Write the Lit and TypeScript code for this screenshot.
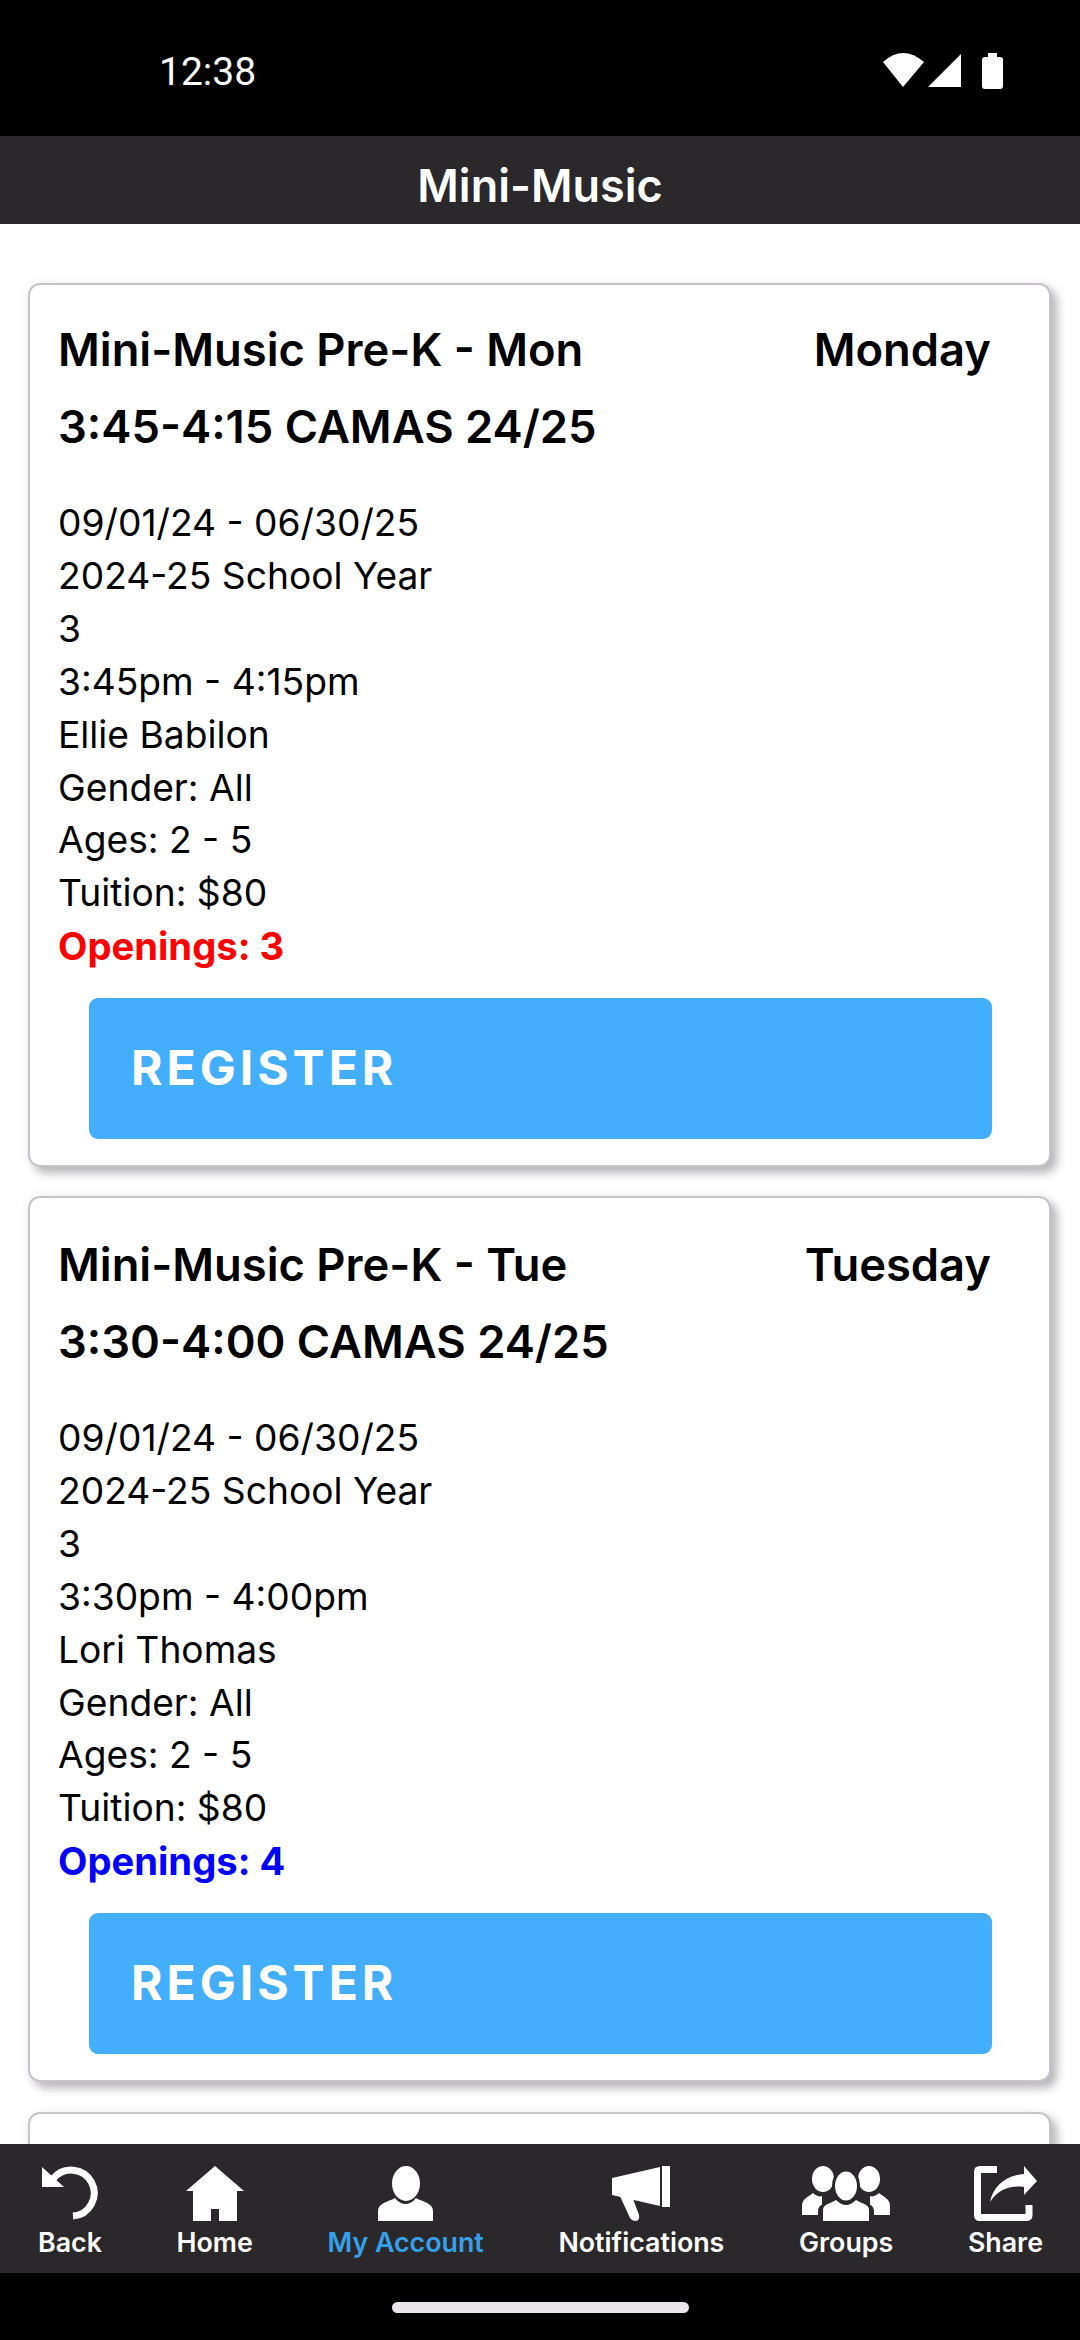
import { LitElement, html, css, svg } from "lit";
import { customElement } from "lit/decorators.js";

const ICONS: Record<string, { w: number; body: unknown }> = {
  back: { w: 56, body: svg`<path d="M11 13A23 23 0 1 1 31 50" fill="none" stroke="#fff" stroke-width="7"/><path d="M0 1V21H22Z" fill="#fff"/>` },
  home: { w: 58, body: svg`<path fill-rule="evenodd" d="M29 0L58 25H51V55H33V43H25V55H7V25H0Z" fill="#fff"/>` },
  account: { w: 55, body: svg`<ellipse cx="28" cy="17.5" rx="14" ry="17.5" fill="#fff"/><path d="M0 55V45C0 37 10 36 17 32C20 36 24 38 27.5 38C31 38 35 36 38 32C45 36 55 37 55 45V55Z" fill="#fff"/>` },
  notifications: { w: 58, body: svg`<path d="M0 12L48 1V40L0 29Z" fill="#fff"/><path d="M50 0H58V41H50Z" fill="#fff"/><path d="M7 28L21 33L27 49Q28 55 23 55Q20 55 18 52Z" fill="#fff"/>` },
  groups: { w: 88, body: svg`<ellipse cx="21" cy="13" rx="11" ry="13" fill="#fff"/><ellipse cx="67" cy="13" rx="11" ry="13" fill="#fff"/><path d="M0 49V40C0 33 6 31 11 27C14 30 18 31 20 30V49Z" fill="#fff"/><path d="M88 49V40C88 33 82 31 77 27C74 30 70 31 68 30V49Z" fill="#fff"/><ellipse cx="44" cy="20" rx="14" ry="18" fill="#2a282b"/><path d="M16 55V45C16 38 24 37 31 33L57 33C64 37 72 38 72 45V55Z" fill="#2a282b"/><ellipse cx="44" cy="20" rx="11" ry="14.5" fill="#fff"/><path d="M21 55V44C21 38 28 38 34 34C37 37 41 39 44 39C47 39 51 37 54 34C60 38 67 38 67 44V55Z" fill="#fff"/>` },
  share: { w: 63, body: svg`<path d="M23 3.5H6Q3.5 3.5 3.5 6V49Q3.5 51.5 6 51.5H52Q55 51.5 55 49V39" fill="none" stroke="#fff" stroke-width="7"/><path d="M50 0L63 15L50 29V21C35 19 24 24 16 36C19 20 32 9 50 8Z" fill="#fff"/>` },
};

interface Course {
  title: [string, string];
  day: string;
  time: string;
  teacher: string;
  openings: number;
  color: string;
}

const COURSES: Course[] = [
  { title: ["Mini-Music Pre-K - Mon", "3:45-4:15 CAMAS 24/25"], day: "Monday", time: "3:45pm - 4:15pm", teacher: "Ellie Babilon", openings: 3, color: "#ff0000" },
  { title: ["Mini-Music Pre-K - Tue", "3:30-4:00 CAMAS 24/25"], day: "Tuesday", time: "3:30pm - 4:00pm", teacher: "Lori Thomas", openings: 4, color: "#0000ff" },
];

const NAV = [
  { id: "back", label: "Back" },
  { id: "home", label: "Home" },
  { id: "account", label: "My Account", active: true },
  { id: "notifications", label: "Notifications" },
  { id: "groups", label: "Groups" },
  { id: "share", label: "Share" },
];

@customElement("app-root")
export class AppRoot extends LitElement {
  static styles = css`
    :host { display: flex; flex-direction: column; width: 1080px; height: 2340px; overflow: hidden; background: #fff; font-family: Inter, "Liberation Sans", sans-serif; color: #000; }
    .status { flex: none; height: 136px; box-sizing: border-box; background: #000; color: #fff; display: flex; align-items: center; justify-content: space-between; padding: 8px 77px 0 159px; font: 400 39px Roboto, sans-serif; }
    .status svg { display: block; margin-bottom: 2px; }
    .header { flex: none; height: 88px; box-sizing: border-box; padding-top: 10px; background: #2a282b; color: #fff; display: flex; align-items: center; justify-content: center; font-size: 45px; font-weight: 600; }
    .main { flex: 1; min-height: 0; overflow: hidden; padding: 59px 29px 0 28px; display: flex; flex-direction: column; gap: 29px; background: #fff; }
    .card { flex: none; box-sizing: border-box; height: 884px; background: #fff; border: 2px solid #c6c4c8; border-radius: 12px; box-shadow: 6px 6px 10px rgba(60, 58, 64, 0.36), 0 0 14px rgba(60, 58, 64, 0.05); padding: 26px 28px 0; }
    .card.second { height: 886px; padding-top: 28px; }
    .card.peek { margin-top: 1px; }
    .head { display: flex; justify-content: space-between; align-items: flex-start; padding-right: 30px; font-size: 45.3px; font-weight: 600; line-height: 77px; }
    .body { margin-top: 32px; font-size: 37.2px; line-height: 52.9px; }
    .open { font-weight: 700; font-size: 38.2px; }
    .btn { margin: 25px 29px 0 31px; height: 141px; box-sizing: border-box; padding: 0 0 2px 42px; border-radius: 9px; background: #43aefb; color: #fff; display: flex; align-items: center; font-size: 48px; font-weight: 700; letter-spacing: 4px; }
    .nav { flex: none; height: 129px; background: #2a282b; color: #fff; display: flex; justify-content: space-between; padding: 22px 37px 0 38px; box-sizing: border-box; }
    .item { display: flex; flex-direction: column; align-items: center; font-size: 26.8px; font-weight: 600; line-height: 29px; }
    .item svg { display: block; height: 55px; margin-bottom: 7px; }
    .active { color: #35a0e8; }
    .foot { flex: none; height: 67px; background: #000; display: flex; justify-content: center; padding-top: 29px; box-sizing: border-box; }
    .pill { width: 297px; height: 11px; border-radius: 6px; background: #e8e6e9; }
  `;

  private card(c: Course, i: number) {
    return html`<section class="card ${i === 1 ? "second" : ""}">
      <div class="head"><div>${c.title[0]}<br />${c.title[1]}</div><div>${c.day}</div></div>
      <div class="body">
        <div>09/01/24 - 06/30/25</div>
        <div>2024-25 School Year</div>
        <div>3</div>
        <div>${c.time}</div>
        <div>${c.teacher}</div>
        <div>Gender: All</div>
        <div>Ages: 2 - 5</div>
        <div>Tuition: $80</div>
        <div class="open" style="color:${c.color}">Openings: ${c.openings}</div>
      </div>
      <div class="btn">REGISTER</div>
    </section>`;
  }

  render() {
    return html`
      <div class="status">
        <span>12:38</span>
        <svg width="120" height="36" viewBox="0 0 120 36" fill="#fff">
          <path d="M0 9Q20 -9 41 9L20 34Z" />
          <path d="M45 34L78 1V34Z" />
          <path d="M105 0H114V4H117Q120 4 120 7V33Q120 36 117 36H102Q99 36 99 33V7Q99 4 102 4H105Z" />
        </svg>
      </div>
      <div class="header">Mini-Music</div>
      <div class="main">
        ${COURSES.map((c, i) => this.card(c, i))}
        <section class="card peek"></section>
      </div>
      <nav class="nav">
        ${NAV.map((n) => html`<div class="item ${n.active ? "active" : ""}">
          <svg width=${ICONS[n.id].w} height="55" viewBox="0 0 ${ICONS[n.id].w} 55">${ICONS[n.id].body}</svg>
          <span>${n.label}</span>
        </div>`)}
      </nav>
      <div class="foot"><div class="pill"></div></div>
    `;
  }
}
